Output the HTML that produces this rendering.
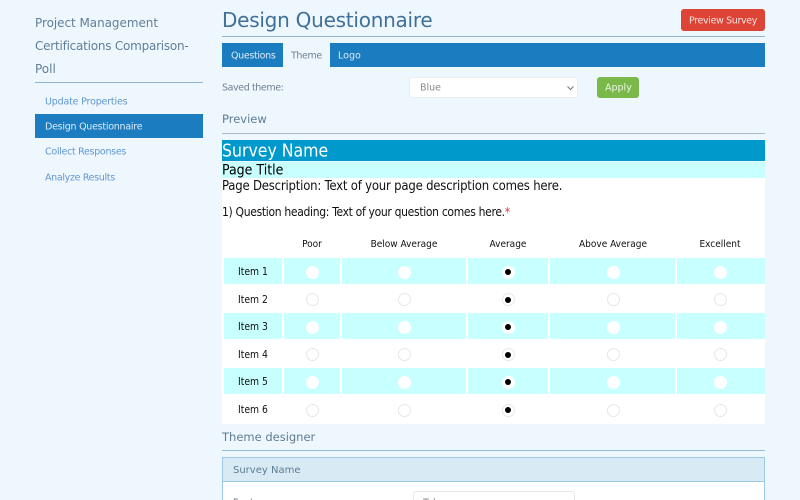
<!DOCTYPE html>
<html lang="en">
<head>
<meta charset="utf-8">
<title>Design Questionnaire</title>
<style>
html,body{margin:0;padding:0;width:800px;height:500px;overflow:hidden;background:#eff7fe}
body{position:relative;font-family:"DejaVu Sans","Liberation Sans",sans-serif}
.a{position:absolute;white-space:nowrap}
.t{position:absolute;white-space:nowrap;transform:translateY(-50%);line-height:1.2;margin-top:1px}
.s{font-family:"DejaVu Sans Condensed","DejaVu Sans",sans-serif;color:#111}
.h{font-size:10px;transform:translate(-50%,-50%)}
.i{left:238px;top:13px;font-size:10.3px}
.r{position:absolute;width:11px;height:11px;border:1px solid #e4e8ea;border-radius:50%;background:#fff}
.c .r{border-color:#fff}
.d::after{content:"";position:absolute;left:2.500px;top:2.500px;width:6px;height:6px;border-radius:50%;background:#000}
</style>
</head>
<body>
<!-- Sidebar -->
<div class="t" style="left:35px;top:22px;font-size:12px;color:#5f7f99;letter-spacing:-.05px">Project Management</div>
<div class="t" style="left:35px;top:45px;font-size:12px;color:#5f7f99;letter-spacing:-.23px">Certifications Comparison-</div>
<div class="t" style="left:35px;top:68px;font-size:12px;color:#5f7f99">Poll</div>
<div class="a" style="left:35px;top:82px;width:168px;height:1px;background:#8fb3d0"></div>
<div class="t" style="left:45px;top:101px;font-size:9.5px;color:#5f97d2;letter-spacing:-.18px">Update Properties</div>
<div class="a" style="left:35px;top:114px;width:168px;height:24px;background:#1b7cc0"></div>
<div class="t" style="left:45px;top:126px;font-size:9.5px;color:#dcecf8;letter-spacing:-.25px">Design Questionnaire</div>
<div class="t" style="left:45px;top:151px;font-size:9.5px;color:#5f97d2;letter-spacing:-.3px">Collect Responses</div>
<div class="t" style="left:45px;top:177px;font-size:9.5px;color:#5f97d2;letter-spacing:-.33px">Analyze Results</div>

<!-- Header -->
<div class="t" style="left:222px;top:19px;font-size:20px;color:#3f7099;letter-spacing:-.25px">Design Questionnaire</div>
<div class="a" style="left:681px;top:9px;width:84px;height:22px;background:#dd4436;border-radius:3px"></div>
<div class="t" style="left:689px;top:20px;font-size:9.5px;color:#fbe3e0;letter-spacing:-.36px">Preview Survey</div>
<div class="a" style="left:222px;top:36px;width:543px;height:1px;background:#93b4cf"></div>

<!-- Tabs -->
<div class="a" style="left:222px;top:43px;width:543px;height:24px;background:#1b7cc0"></div>
<div class="a" style="left:283px;top:43px;width:47px;height:24px;background:#eff7fe"></div>
<div class="t" style="left:231px;top:55px;font-size:9.5px;color:#dcecf8;letter-spacing:-.33px">Questions</div>
<div class="t" style="left:291px;top:55px;font-size:9.5px;color:#6b8598;letter-spacing:-.4px">Theme</div>
<div class="t" style="left:338px;top:55px;font-size:9.5px;color:#dcecf8">Logo</div>

<!-- Saved theme -->
<div class="t" style="left:222px;top:87px;font-size:9.5px;color:#6e8190;letter-spacing:-.4px">Saved theme:</div>
<div class="a" style="left:409px;top:77px;width:169px;height:21px;background:#fff;border:1px solid #e6edf3;border-radius:3px;box-sizing:border-box"></div>
<div class="t" style="left:420px;top:86.500px;font-size:9.5px;color:#888">Blue</div>
<svg class="a" style="left:566px;top:85px" width="9" height="6" viewBox="0 0 9 6"><path d="M1.500 1.500L4.500 4.500L7.500 1.500" fill="none" stroke="#777" stroke-width="1"/></svg>
<div class="a" style="left:597px;top:77px;width:42px;height:21px;background:#7ab84a;border-radius:3px"></div>
<div class="t" style="left:605px;top:86.500px;font-size:9.5px;color:#eaf6df">Apply</div>

<!-- Preview -->
<div class="t" style="left:222px;top:119px;font-size:11.5px;color:#5c7c95">Preview</div>
<div class="a" style="left:222px;top:133px;width:543px;height:1px;background:#a9bccb"></div>

<div class="a" style="left:222px;top:140px;width:543px;height:21px;background:#0099cc"></div>
<div class="t s" style="left:222px;top:151px;font-size:17.5px;color:#fff">Survey Name</div>
<div class="a" style="left:222px;top:162px;width:543px;height:16px;background:#c8ffff"></div>
<div class="t s" style="left:222px;top:170px;font-size:14px;color:#000">Page Title</div>
<div class="a" style="left:222px;top:178px;width:543px;height:246px;background:#fff"></div>
<div class="t s" style="left:222px;top:186px;font-size:13px;letter-spacing:-.2px">Page Description: Text of your page description comes here.</div>
<div class="t s" style="left:222px;top:211px;font-size:12px;letter-spacing:-.32px">1) Question heading: Text of your question comes here.<span style="color:#e33;letter-spacing:0">*</span></div>

<!-- Matrix header -->
<div class="t s h" style="left:312px;top:244px">Poor</div>
<div class="t s h" style="left:404px;top:244px">Below Average</div>
<div class="t s h" style="left:508px;top:244px">Average</div>
<div class="t s h" style="left:613px;top:244px">Above Average</div>
<div class="t s h" style="left:720px;top:244px">Excellent</div>

<!-- Row 1 -->
<div class="a c" style="left:0;top:258px;width:800px;height:26px">
  <div class="a" style="left:224px;top:0;width:58px;height:26px;background:#c8ffff"></div>
  <div class="a" style="left:284px;top:0;width:56px;height:26px;background:#c8ffff"></div>
  <div class="a" style="left:342px;top:0;width:124px;height:26px;background:#c8ffff"></div>
  <div class="a" style="left:468px;top:0;width:80px;height:26px;background:#c8ffff"></div>
  <div class="a" style="left:550px;top:0;width:125px;height:26px;background:#c8ffff"></div>
  <div class="a" style="left:677px;top:0;width:88px;height:26px;background:#c8ffff"></div>
  <div class="t s i">Item 1</div>
  <div class="r" style="left:305.500px;top:7.500px"></div><div class="r" style="left:397.500px;top:7.500px"></div><div class="r d" style="left:501.500px;top:7.500px"></div><div class="r" style="left:606.500px;top:7.500px"></div><div class="r" style="left:713.500px;top:7.500px"></div>
</div>
<!-- Row 2 -->
<div class="a" style="left:0;top:285.500px;width:800px;height:26px">
  <div class="t s i">Item 2</div>
  <div class="r" style="left:305.500px;top:7.500px"></div><div class="r" style="left:397.500px;top:7.500px"></div><div class="r d" style="left:501.500px;top:7.500px"></div><div class="r" style="left:606.500px;top:7.500px"></div><div class="r" style="left:713.500px;top:7.500px"></div>
</div>
<!-- Row 3 -->
<div class="a c" style="left:0;top:313px;width:800px;height:26px">
  <div class="a" style="left:224px;top:0;width:58px;height:26px;background:#c8ffff"></div>
  <div class="a" style="left:284px;top:0;width:56px;height:26px;background:#c8ffff"></div>
  <div class="a" style="left:342px;top:0;width:124px;height:26px;background:#c8ffff"></div>
  <div class="a" style="left:468px;top:0;width:80px;height:26px;background:#c8ffff"></div>
  <div class="a" style="left:550px;top:0;width:125px;height:26px;background:#c8ffff"></div>
  <div class="a" style="left:677px;top:0;width:88px;height:26px;background:#c8ffff"></div>
  <div class="t s i">Item 3</div>
  <div class="r" style="left:305.500px;top:7.500px"></div><div class="r" style="left:397.500px;top:7.500px"></div><div class="r d" style="left:501.500px;top:7.500px"></div><div class="r" style="left:606.500px;top:7.500px"></div><div class="r" style="left:713.500px;top:7.500px"></div>
</div>
<!-- Row 4 -->
<div class="a" style="left:0;top:340.500px;width:800px;height:26px">
  <div class="t s i">Item 4</div>
  <div class="r" style="left:305.500px;top:7.500px"></div><div class="r" style="left:397.500px;top:7.500px"></div><div class="r d" style="left:501.500px;top:7.500px"></div><div class="r" style="left:606.500px;top:7.500px"></div><div class="r" style="left:713.500px;top:7.500px"></div>
</div>
<!-- Row 5 -->
<div class="a c" style="left:0;top:368px;width:800px;height:26px">
  <div class="a" style="left:224px;top:0;width:58px;height:26px;background:#c8ffff"></div>
  <div class="a" style="left:284px;top:0;width:56px;height:26px;background:#c8ffff"></div>
  <div class="a" style="left:342px;top:0;width:124px;height:26px;background:#c8ffff"></div>
  <div class="a" style="left:468px;top:0;width:80px;height:26px;background:#c8ffff"></div>
  <div class="a" style="left:550px;top:0;width:125px;height:26px;background:#c8ffff"></div>
  <div class="a" style="left:677px;top:0;width:88px;height:26px;background:#c8ffff"></div>
  <div class="t s i">Item 5</div>
  <div class="r" style="left:305.500px;top:7.500px"></div><div class="r" style="left:397.500px;top:7.500px"></div><div class="r d" style="left:501.500px;top:7.500px"></div><div class="r" style="left:606.500px;top:7.500px"></div><div class="r" style="left:713.500px;top:7.500px"></div>
</div>
<!-- Row 6 -->
<div class="a" style="left:0;top:396px;width:800px;height:26px">
  <div class="t s i">Item 6</div>
  <div class="r" style="left:305.500px;top:7.500px"></div><div class="r" style="left:397.500px;top:7.500px"></div><div class="r d" style="left:501.500px;top:7.500px"></div><div class="r" style="left:606.500px;top:7.500px"></div><div class="r" style="left:713.500px;top:7.500px"></div>
</div>

<!-- Theme designer -->
<div class="t" style="left:222px;top:437px;font-size:11.5px;color:#5c7c95">Theme designer</div>
<div class="a" style="left:222px;top:450px;width:543px;height:1px;background:#92bcdc"></div>
<div class="a" style="left:222px;top:457px;width:543px;height:60px;box-sizing:border-box;background:#fff;border:1px solid #9cc9ea"></div>
<div class="a" style="left:223px;top:458px;width:541px;height:23px;background:#d8ebf5;border-bottom:1px solid #9cc7e2"></div>
<div class="t" style="left:233px;top:470px;font-size:10px;color:#5c7c95">Survey Name</div>
<div class="t" style="left:233px;top:502px;font-size:9.5px;color:#6e8190">Font</div>
<div class="a" style="left:413px;top:491px;width:162px;height:21px;box-sizing:border-box;background:#fff;border:1px solid #e6e9ec;border-radius:3px"></div>
<div class="t" style="left:423px;top:502px;font-size:9.5px;color:#888">Tahoma</div>
</body>
</html>
